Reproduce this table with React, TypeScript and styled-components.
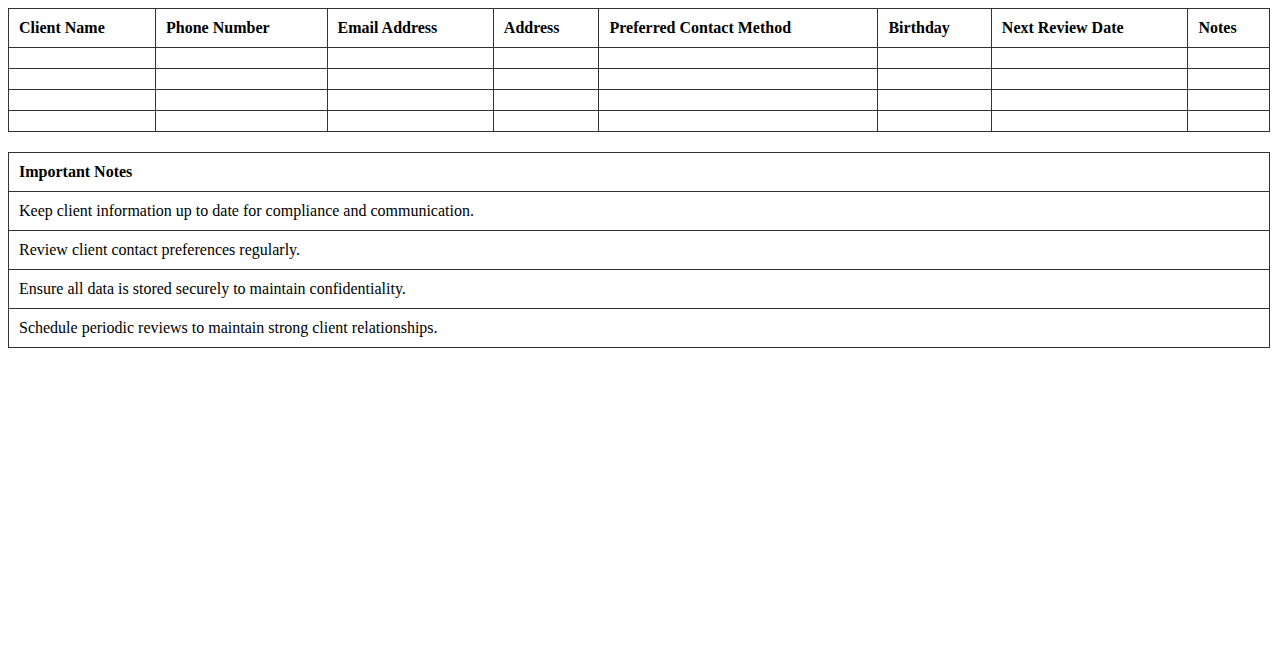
import styled, { createGlobalStyle } from "styled-components";

const GlobalStyle = createGlobalStyle`
  body {
    margin: 8px;
    font-family: "Liberation Serif", "Times New Roman", serif;
    font-size: 16px;
    color: #000;
    background: #fff;
  }
`;

const Table = styled.table`
  width: 100%;
  border-collapse: collapse;
  margin-bottom: 20px;
`;

const HeadCell = styled.th`
  border: 1px solid #333;
  padding: 10px;
  text-align: left;
  font-weight: bold;
`;

const Cell = styled.td`
  border: 1px solid #333;
  padding: 10px;
  text-align: left;
`;

const headers = [
  "Client Name",
  "Phone Number",
  "Email Address",
  "Address",
  "Preferred Contact Method",
  "Birthday",
  "Next Review Date",
  "Notes",
];

const notes = [
  "Keep client information up to date for compliance and communication.",
  "Review client contact preferences regularly.",
  "Ensure all data is stored securely to maintain confidentiality.",
  "Schedule periodic reviews to maintain strong client relationships.",
];

function App() {
  return (
    <>
      <GlobalStyle />
      <Table>
        <thead>
          <tr>
            {headers.map((h) => (
              <HeadCell key={h}>{h}</HeadCell>
            ))}
          </tr>
        </thead>
        <tbody>
          {[0, 1, 2, 3].map((r) => (
            <tr key={r}>
              {headers.map((h) => (
                <Cell key={h}></Cell>
              ))}
            </tr>
          ))}
        </tbody>
      </Table>
      <Table>
        <thead>
          <tr>
            <HeadCell>Important Notes</HeadCell>
          </tr>
        </thead>
        <tbody>
          {notes.map((n) => (
            <tr key={n}>
              <Cell>{n}</Cell>
            </tr>
          ))}
        </tbody>
      </Table>
    </>
  );
}

export default App;
